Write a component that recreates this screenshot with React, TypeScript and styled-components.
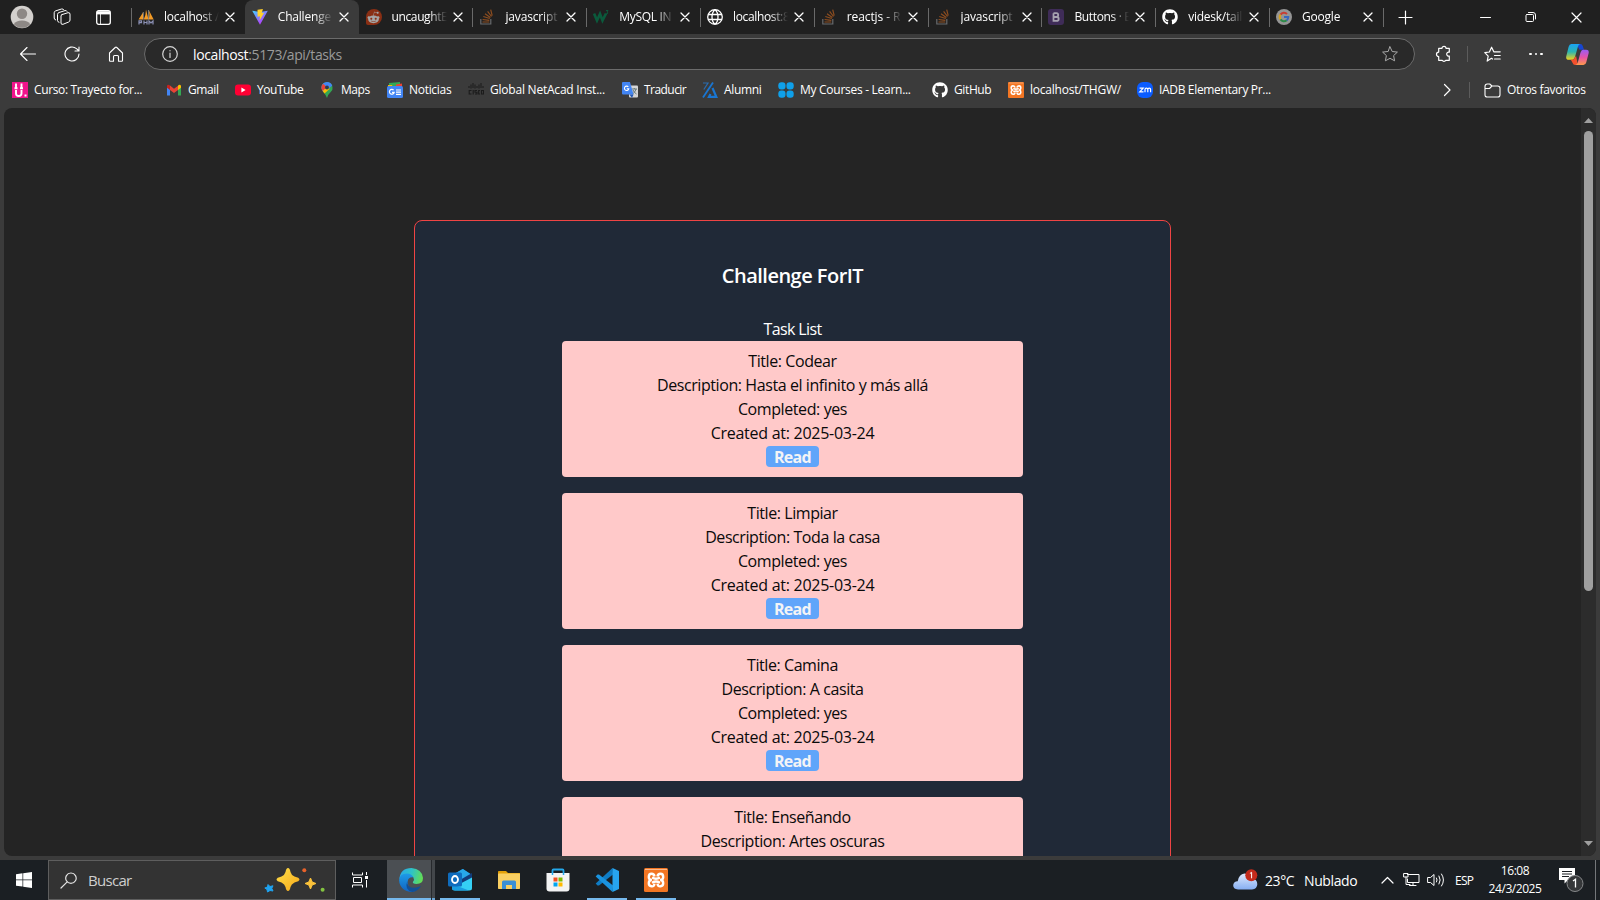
import React from "react";
import styled, { createGlobalStyle, css } from "styled-components";
import { FaGithub, FaRedditAlien } from "react-icons/fa";

const Global = createGlobalStyle`
  * { box-sizing: border-box; }
  body { margin: 0; background: #3b3b3b; overflow: hidden; }
  svg { display: block; flex: none; }
`;

const uiFont = css`
  font-family: "Open Sans", "Noto Sans", sans-serif;
  white-space: nowrap;
`;

const Screen = styled.div`
  ${uiFont}
  width: 1600px;
  height: 900px;
  display: flex;
  flex-direction: column;
  background: #3b3b3b;
  color: #fff;
  font-size: 12px;
  overflow: hidden;
`;

/* ---------- tab strip ---------- */
const TabStrip = styled.div`
  display: flex;
  align-items: stretch;
  height: 34px;
  background: #202020;
`;
const StripTools = styled.div`
  display: flex;
  align-items: center;
  width: 131px;
  padding-left: 10px;
`;
const WorkspacesSlot = styled.span`
  margin: 0 25px 0 19px;
`;
const Tab = styled.div<{ $active?: boolean; $line: boolean }>`
  display: flex;
  align-items: center;
  flex: none;
  width: 113.8px;
  padding-left: 7px;
  position: relative;
  background: ${(p) => (p.$active ? "#3b3b3b" : "transparent")};
  border-radius: 8px 8px 0 0;
  &::before {
    content: "";
    display: ${(p) => (p.$line ? "block" : "none")};
    position: absolute;
    left: 0;
    top: 8px;
    width: 1px;
    height: 19px;
    background: #6a6a6a;
  }
`;
const TabTitle = styled.span<{ $ls: number }>`
  margin-left: 10px;
  width: 59px;
  line-height: 18px;
  letter-spacing: ${(p) => p.$ls}px;
  mask-image: linear-gradient(90deg, #000 37px, transparent 55px);
`;
const TabClose = styled.span`
  display: flex;
  margin-left: 2px;
`;
const StripEnd = styled.div`
  display: flex;
  align-items: center;
  flex: 1;
  padding-left: 15px;
  position: relative;
  &::before {
    content: "";
    position: absolute;
    left: 0;
    top: 8px;
    width: 1px;
    height: 19px;
    background: #6a6a6a;
  }
`;
const WindowButtons = styled.div`
  display: flex;
  align-items: center;
  gap: 34px;
  margin-left: 67px;
`;

/* ---------- address row ---------- */
const Toolbar = styled.div`
  display: flex;
  align-items: center;
  height: 40px;
  padding-left: 20px;
`;
const NavButtons = styled.div`
  display: flex;
  gap: 28px;
  width: 124px;
`;
const AddressBar = styled.div`
  display: flex;
  align-items: center;
  width: 1271px;
  height: 32px;
  padding: 0 16px 0 17px;
  border: 1px solid #6b6b6b;
  border-radius: 16px;
  background: #292929;
`;
const Url = styled.span`
  flex: 1;
  margin-left: 15px;
  padding-top: 1px;
  font-size: 14px;
  line-height: 20px;
  letter-spacing: -0.38px;
  color: #9a9a9a;
  b { font-weight: 400; color: #fff; }
`;
const ToolbarEnd = styled.div`
  display: flex;
  align-items: center;
  margin-left: 20px;
`;
const ToolbarRule = styled.span`
  width: 1px;
  height: 16px;
  margin: 0 16px 0 14px;
  background: #5c5c5c;
`;
const BookmarkRule = styled(ToolbarRule)`
  margin: 0 14px 0 18px;
`;
const DotsBox = styled.span`
  display: flex;
  gap: 3px;
  margin: 0 23px 0 28px;
  i { width: 2.5px; height: 2.5px; border-radius: 50%; background: #fff; }
`;

/* ---------- bookmarks ---------- */
const BookmarkBar = styled.div`
  display: flex;
  align-items: center;
  height: 34px;
  padding: 0 0 2px 12px;
`;
const Bookmark = styled.div<{ $w: number; $ls: number }>`
  display: flex;
  align-items: center;
  gap: 6px;
  flex: none;
  width: ${(p) => p.$w}px;
  letter-spacing: ${(p) => p.$ls}px;
  line-height: 16px;
`;
const BookmarkEnd = styled.div`
  display: flex;
  align-items: center;
  flex: 1;
`;
const FolderName = styled.span`
  margin-left: 6px;
  line-height: 16px;
  letter-spacing: -0.34px;
`;

/* ---------- page ---------- */
const Viewport = styled.div`
  display: flex;
  width: 1592px;
  height: 748px;
  margin: 0 4px 4px;
  border-radius: 8px;
  background: #242424;
  overflow: hidden;
  flex: none;
`;
const Page = styled.main`
  flex: 1;
  height: 748px;
  padding-top: 112px;
  overflow: hidden;
`;
const Panel = styled.section`
  display: flex;
  flex-direction: column;
  align-items: center;
  width: 757px;
  height: 900px;
  margin: 0 auto;
  padding-top: 41px;
  border: 1px solid #ef4444;
  border-radius: 8px;
  background: #202937;
`;
const Heading = styled.h1`
  margin: 0 0 27px;
  font-size: 20px;
  font-weight: 600;
  line-height: 28px;
  letter-spacing: -0.52px;
`;
const ListTitle = styled.h2`
  margin: 0;
  font-size: 16px;
  font-weight: 400;
  line-height: 24px;
  letter-spacing: -0.62px;
`;
const TaskList = styled.div`
  display: flex;
  flex-direction: column;
  gap: 16px;
`;
const TaskCard = styled.article`
  display: flex;
  flex-direction: column;
  align-items: center;
  width: 461px;
  height: 136px;
  padding: 8px;
  border-radius: 4px;
  background: #ffc9c9;
  color: #0a0a0a;
`;
const TaskLine = styled.p<{ $ls: number }>`
  margin: 0;
  font-size: 16px;
  line-height: 24px;
  letter-spacing: ${(p) => p.$ls}px;
`;
const ReadButton = styled.button`
  ${uiFont}
  width: 53px;
  height: 21px;
  margin-top: 1px;
  padding: 0;
  border: 0;
  border-radius: 4px;
  background: #60a5fa;
  color: #f3f4f6;
  font-size: 16px;
  font-weight: 700;
  line-height: 22px;
  letter-spacing: -0.65px;
`;
const ScrollTrack = styled.div`
  display: flex;
  flex-direction: column;
  align-items: center;
  width: 15px;
  padding: 10px 0;
  background: #2c2c2c;
`;
const Thumb = styled.div`
  width: 9px;
  height: 460px;
  margin: 8px 0 auto;
  border-radius: 5px;
  background: #9f9f9f;
`;

/* ---------- taskbar ---------- */
const Taskbar = styled.footer`
  display: flex;
  align-items: center;
  height: 40px;
  flex: none;
  background: #1b1f23;
`;
const StartButton = styled.div`
  display: flex;
  justify-content: center;
  width: 48px;
`;
const SearchBox = styled.div`
  display: flex;
  align-items: center;
  width: 288px;
  height: 40px;
  padding: 0 9px 0 11px;
  border: 1px solid #5e5e5e;
  background: #333;
`;
const SearchText = styled.span`
  flex: 1;
  margin-left: 11px;
  font-size: 15px;
  letter-spacing: -0.7px;
  color: #cfcfcf;
`;
const TaskViewButton = styled.div`
  display: flex;
  justify-content: center;
  width: 51px;
  padding-right: 3px;
`;
const AppButton = styled.div<{ $open?: boolean; $active?: boolean }>`
  display: flex;
  align-items: center;
  justify-content: center;
  width: ${(p) => (p.$active ? 44 : 40)}px;
  height: 40px;
  margin-right: 9px;
  padding-left: ${(p) => (p.$active ? 4 : 0)}px;
  background: ${(p) => (p.$active ? "#4b4f53" : "transparent")};
  box-shadow: ${(p) => (p.$open ? "inset 0 -2px #76b9ed" : "none")};
`;
const StackEdge = styled.div`
  width: 4px;
  height: 40px;
  margin: 0 5px 0 -9px;
  border-left: 1px solid #26292d;
  background: #43474b;
  box-shadow: inset 0 -2px #69a6d6;
`;
const Weather = styled.div`
  display: flex;
  align-items: center;
  margin-left: auto;
  width: 148px;
  font-size: 14px;
  letter-spacing: -0.38px;
`;
const Temp = styled.span`
  width: 39px;
  margin-left: 7px;
`;
const Tray = styled.div`
  display: flex;
  align-items: center;
  gap: 7px;
  width: 74px;
`;
const TrayArrow = styled.span`
  margin-right: 2px;
`;
const Lang = styled.span`
  width: 30px;
  letter-spacing: -0.75px;
`;
const Clock = styled.div`
  width: 60px;
  text-align: center;
  line-height: 18px;
  letter-spacing: -0.45px;
  padding-bottom: 1px;
`;
const Notify = styled.div`
  width: 36px;
  margin-left: 14px;
`;
const DesktopEdge = styled.div`
  width: 5px;
  height: 40px;
  border-left: 1px solid #74777a;
`;

/* ---------- icons ---------- */
type LineProps = { w?: number; h?: number; d: string; sw?: number; color?: string; fill?: string };
const Line = ({ w = 16, h = w, d, sw = 1, color = "#fff", fill = "none" }: LineProps) => (
  <svg width={w} height={h} viewBox={`0 0 ${w} ${h}`} fill={fill} stroke={color} strokeWidth={sw} strokeLinecap="round" strokeLinejoin="round">
    <path d={d} />
  </svg>
);

const Avatar = () => (
  <svg width="24" height="24" viewBox="0 0 24 24">
    <circle cx="12" cy="12" r="11.3" fill="#d3d0cd" />
    <circle cx="12" cy="8.700" r="5.200" fill="#8d8885" />
    <path d="M3.800 19.200Q6 15.600 12 15.600T20.200 19.200A11 11 0 0 1 3.800 19.200Z" fill="#8d8885" />
  </svg>
);
const Workspaces = () => (
  <Line w={18} d="M9 6.600 15 4.700Q17 4.300 17 6.200V12q0 1.500-1.300 2L10 16.300Q8 16.800 8 15V8Q8 7 9 6.600ZM6 14.300Q4.500 14 4.500 12.500V6.500Q4.500 5 6 4.500L12 2.600Q13.500 2.200 14 3.300M2.700 12Q1.200 11.600 1.200 10V4.700Q1.200 3.300 2.600 2.900L8.500 1Q10.200.6 10.700 1.700" />
);
const TabActions = () => (
  <svg width="15" height="15" viewBox="0 0 15 15" fill="none" stroke="#fff">
    <rect x=".7" y=".7" width="13.6" height="13.6" rx="2" strokeWidth="1.300" />
    <path d="M1 2.800h13" strokeWidth="3.200" />
    <path d="M4.500 4v10" strokeWidth=".8" />
  </svg>
);
const PhpMyAdmin = () => (
  <svg width="16" height="16" viewBox="0 0 16 16">
    <path d="M.5 10.500 5 3.500V10.500ZM5.700 10.500Q8 6 8 .5L10.500 10.500ZM10.800 10.500Q12 6 11 1.500L15.700 10.500Z" fill="#f29a26" />
    <path d="M5.300 3v7.500M10.600 1v9.500" stroke="#c8c4be" strokeWidth=".6" />
    <path d="M1 15.500V11.800H3.500V13.700H1M6 15.500v-4M9 15.500v-4M6 13.500h3M11 15.500v-3.500l2 2 2-2v3.500" fill="none" stroke="#8b90b4" strokeWidth="1.200" />
  </svg>
);
const Vite = () => (
  <svg width="16" height="16" viewBox="0 0 16 16">
    <defs>
      <linearGradient id="vite" x1="0" y1="0" x2=".6" y2="1"><stop stopColor="#41d1ff" /><stop offset="1" stopColor="#bd34fe" /></linearGradient>
    </defs>
    <path d="M.2 1.700 8 3 15.800 1.700 8 15.800Z" fill="url(#vite)" />
    <path d="M5.500.8 10.900 0 9.800 4.100l2.300-.4L7.600 11.500 8 7.200 5.600 7.700Z" fill="#ffd02b" />
  </svg>
);
const RoundReddit = styled.span`
  display: flex;
  align-items: center;
  justify-content: center;
  width: 16px;
  height: 16px;
  border-radius: 8px 8px 8px 2px;
  background: #8a2f14;
  color: #a5a5a5;
`;
const Reddit = () => <RoundReddit><FaRedditAlien size={13} /></RoundReddit>;
const Stack = () => (
  <svg width="16" height="16" viewBox="0 0 16 16" fill="none">
    <path d="M1.800 10v5h10v-5" stroke="#686a6d" strokeWidth="1.200" />
    <path d="M3.500 13h6.800M3.600 10.500l6.700.8M4.300 7.500l6.500 2M6 4.700l5.400 3.700M8.600 2.300l3.900 5.200M11.700.6l1.500 6" stroke="#8e4e20" strokeWidth="1.200" />
  </svg>
);
const W3 = () => (
  <svg width="16" height="16" viewBox="0 0 16 16" fill="none" stroke="#0b5a3c">
    <path d="M1 4.500 4 11.500 7 5l2.500 6.500L13 4.500" strokeWidth="2.700" />
    <path d="M13 1.500h2L14 3q1.500.5 0 2h-1" strokeWidth="1" />
  </svg>
);
const Globe = () => <Line w={16} sw={1.300} d="M8 .7a7.300 7.300 0 1 0 0 14.600A7.300 7.300 0 0 0 8 .7ZM8 .7C4 4 4 12 8 15.300M8 .7c4 3.300 4 11.300 0 14.600M1.500 5.500h13M1.500 10.500h13" />;
const Bootstrap = () => (
  <svg width="16" height="16" viewBox="0 0 16 16">
    <rect width="16" height="16" rx="3" fill="#3f2c58" />
    <path d="M5.500 4.200v7.600h3.200q2 0 2-1.900t-2-1.900H5.500M8.500 8q1.700-.1 1.700-1.900t-1.700-1.900h-3" fill="none" stroke="#a7a2b0" strokeWidth="1.800" />
  </svg>
);
const Google = () => (
  <svg width="16" height="16" viewBox="0 0 16 16" fill="none" strokeWidth="2.100">
    <circle cx="8" cy="8" r="8" fill="#959595" />
    <path d="M4.500 5.600A4.300 4.300 0 0 1 11 5" stroke="#c93c32" />
    <path d="M4.500 10.400a4.300 4.300 0 0 1 0-4.800" stroke="#d6a120" />
    <path d="M10.700 11.300a4.300 4.300 0 0 1-6.200-.9" stroke="#2d8a48" />
    <path d="M8 8h4.200q0 2.200-1.500 3.300" stroke="#3867be" />
  </svg>
);
const Close = () => <Line w={10} d="M1 1l8 8M9 1l-8 8" sw={1.300} />;

const CursoIcon = () => (
  <svg width="16" height="16" viewBox="0 0 16 16">
    <rect width="16" height="16" fill="#f0148c" />
    <path d="M4 1.500v4M9.500 1.500v4M2.500 6.200h3M8 6.200h3M4 8v3.500q0 2.500 2.700 2.500t2.800-2.500V8" stroke="#fff" strokeWidth="1.900" fill="none" />
    <rect x="12.500" y="12.500" width="2" height="2" fill="#fff" />
  </svg>
);
const Gmail = () => (
  <svg width="16" height="16" viewBox="0 0 16 16">
    <path d="M1 4v9.500h3V6.500Z" fill="#4285f4" />
    <path d="M15 4v9.500h-3V6.500Z" fill="#34a853" />
    <path d="M12 4v4l3-2.300V4Q14.500 2 12.500 3Z" fill="#fbbc04" />
    <path d="M4 3.500V8L8 11l4-3V3.700L8 6.800Z" fill="#ea4335" />
    <path d="M1 5.700 4 8V3.600Q1.500 1.500 1 4Z" fill="#c5221f" />
  </svg>
);
const YouTube = () => (
  <svg width="16" height="16" viewBox="0 0 16 16">
    <rect y="2.400" width="16" height="11.200" rx="3" fill="#f03" />
    <path d="M6.400 5.600v4.800L10.600 8Z" fill="#fff" />
  </svg>
);
const MapsIcon = () => (
  <svg width="16" height="16" viewBox="0 0 16 16">
    <path d="M8 0a5.500 5.500 0 0 0-5.500 5.500Q2.500 8 4.500 10.200T8 16q.8-3.500 3.500-5.800t2-4.700A5.500 5.500 0 0 0 8 0Z" fill="#34a853" />
    <path d="M8 0a5.500 5.500 0 0 1 5.200 3.700L4.600 10.300Q2.500 8 2.500 5.500A5.500 5.500 0 0 1 8 0Z" fill="#4285f4" />
    <path d="M4 1.700 8 5 3.600 9Q2 7 2.600 4Z" fill="#ea4335" />
    <path d="M3.700 9 9.500 3.700 10.500 7 5.500 11.500Z" fill="#fbbc04" />
    <circle cx="8" cy="5.500" r="2" fill="#2a3b52" />
  </svg>
);
const News = () => (
  <svg width="16" height="16" viewBox="0 0 16 16">
    <path d="M2 1 13 0v5H2Z" fill="#34a853" />
    <path d="M9 2.500l6-1v5H9Z" fill="#ea4335" />
    <path d="M1 3h4L6 6H1Z" fill="#fbbc04" />
    <rect y="4" width="16" height="12" rx="1.500" fill="#4285f4" />
    <path d="M6.600 8.100A2.400 2.400 0 1 0 7.200 10.300H5M9 8h5M9 10.200h5M9 12.400h5" stroke="#fff" strokeWidth="1.200" fill="none" />
  </svg>
);
const Cisco = () => (
  <svg width="16" height="16" viewBox="0 0 16 16" stroke="#1b1b1b" fill="none">
    <path d="M1 4v2M3 2.500v4M5 1V6M7 2.500v4M9 4V6M11 2.500v4M13 1V6M15 4v2" strokeWidth="1" />
    <path d="M3.500 8.500H1.200v3.500h2.300M5.200 8v4.500M9 8.500H7v1.700h2v1.800H7M12 8.500h-1.300v3.500H12M13.500 8.500h2v3.500h-2Z" strokeWidth="1.100" />
  </svg>
);
const Translate = () => (
  <svg width="16" height="16" viewBox="0 0 16 16">
    <rect x="7" y="3.500" width="9" height="12" rx="1" fill="#d5d5d5" />
    <path d="M9.500 7h5.500M12.300 6v1M10.500 12q3-2 3.500-5M11 8q1 2.500 3.500 4" stroke="#677" fill="none" />
    <path d="M1 0h7l3.500 12.500H1Q0 12.500 0 11.500V1Q0 0 1 0Z" fill="#4285f4" />
    <path d="m7.500 12.500 2.500 3.500 1.500-3.500Z" fill="#2459b5" />
    <path d="M6.300 4.900A2.200 2.200 0 1 0 6.800 6.700H4.800" stroke="#fff" fill="none" strokeWidth="1.100" />
  </svg>
);
const Alumni = () => (
  <svg width="16" height="16" viewBox="0 0 16 16" fill="none" stroke="#1976d2">
    <path d="M1 1h5L1.800 7.500" strokeWidth="1.200" stroke="#2a6cb0" />
    <path d="M11 .5 1 15.500" strokeWidth="1.800" />
    <path d="M10.500 6 14.300 14.800H7L8.500 12" strokeWidth="2.200" />
  </svg>
);
const Courses = () => (
  <svg width="16" height="16" viewBox="0 0 16 16" fill="#0fa0ea">
    <rect x=".3" y=".3" width="7.200" height="7.200" rx="3" />
    <rect x="8.500" y=".3" width="7.200" height="7.200" rx="3" />
    <rect x=".3" y="8.500" width="7.200" height="7.200" rx="3" />
    <rect x="8.500" y="8.500" width="7.200" height="7.200" rx="3" />
  </svg>
);
const Xampp = ({ s = 16 }: { s?: number }) => (
  <svg width={s} height={s} viewBox="0 0 24 24">
    <rect width="24" height="24" rx="1.500" fill="#f37623" />
    <path d="M1 1.500h22" stroke="#fbb98b" strokeWidth="1" />
    <g fill="none" stroke="#fff" strokeWidth="2.400" strokeLinejoin="round">
      <path d="M10.500 8.500Q10.200 5.800 7.500 5.800T4.800 9Q4.800 11.500 7 12 4.800 12.500 4.800 15.200T7.500 18.300 10.500 15.700M13.500 8.500Q13.800 5.800 16.500 5.800T19.200 9Q19.200 11.500 17 12 19.200 12.500 19.200 15.200T16.500 18.300 13.500 15.700" />
      <path d="M8 9.500q4 2.400 8 0M8 14.700q4-2.400 8 0" />
    </g>
  </svg>
);
const Zoom = () => (
  <svg width="16" height="16" viewBox="0 0 16 16">
    <rect width="16" height="16" rx="6" fill="#0b5cff" />
    <path d="M2.600 6.200h3.600L2.800 9.900h3.700M8 10.300V7.500q0-1.300 1.400-1.300t1.400 1.300v2.800M10.800 7.500q0-1.300 1.400-1.300t1.400 1.300v2.800" fill="none" stroke="#fff" strokeWidth="1.200" />
  </svg>
);
const Copilot = () => (
  <svg width="23" height="21" viewBox="0 0 24 22">
    <defs>
      <linearGradient id="cpA" x1="0" y1="0" x2="0" y2="1"><stop stopColor="#1aa3f5" /><stop offset=".5" stopColor="#2cb5b0" /><stop offset="1" stopColor="#f2d21c" /></linearGradient>
      <linearGradient id="cpB" x1="0" y1="0" x2="0" y2="1"><stop stopColor="#9a5cf5" /><stop offset=".5" stopColor="#e653a8" /><stop offset="1" stopColor="#ff9a4a" /></linearGradient>
    </defs>
    <path d="M11 0h4q2 0 2.500 2l1.300 4H14Z" fill="#1746d1" />
    <path d="M5.500 0H15q-2 .5-2.500 2.500L9.500 13q-1 3.500-4 3.500H3Q-.7 16.500.3 12.500L2.700 3Q3.500 0 5.500 0Z" fill="url(#cpA)" />
    <path d="M5 16.500q3.500 0 4.500-3l1-1 2 9.500H9.500q-2 0-2.600-2.200Z" fill="#f2502d" />
    <path d="M18 6h3q3.500 0 2.600 4l-2.400 9q-.7 3-3 3H10q1.700-.5 2.300-2.500L15 9.500Q16 6 18 6Z" fill="url(#cpB)" />
  </svg>
);
const Edge = () => (
  <svg width="24" height="24" viewBox="0 0 24 24">
    <defs>
      <linearGradient id="edA" x1="0" y1=".3" x2="1" y2=".5"><stop stopColor="#29a9ea" /><stop offset=".5" stopColor="#2fc3c6" /><stop offset="1" stopColor="#63de53" /></linearGradient>
      <linearGradient id="edB" x1="0" y1="0" x2="0" y2="1"><stop stopColor="#1d9be8" /><stop offset="1" stopColor="#1263c0" /></linearGradient>
    </defs>
    <path d="M.3 11Q1.500 0 12.500 0 23 .8 24 10q0 5.800-6.500 6-4.500-.2-3.500-2.300 1.800-2 .3-4.500Q8 4 .3 11Z" fill="url(#edA)" />
    <path d="M.1 12Q1 5.500 8 5.600q4.500.2 6.500 3.800-5.700-.6-5.800 4.600Q9 22 16 23.300A12 12 0 0 1 .1 12Z" fill="url(#edB)" />
    <path d="M8.300 13Q7.500 20 16 19.800q3.500-.3 6-2Q19.300 23 13.500 24 5 22 8.300 13Z" fill="#124f96" />
  </svg>
);
const Outlook = () => (
  <svg width="24" height="24" viewBox="0 0 24 24">
    <path d="M5 7 14.500 1 24 7v6H5Z" fill="#1490df" />
    <path d="M6 6 15 1l9 6-9 6Z" fill="#28a8ea" />
    <path d="M12 12 24 5v7L9 21Z" fill="#123b7a" />
    <path d="M4 20 24 9.500V20q0 2.500-2.500 2.500H7Q4 22.500 4 20Z" fill="#35d0f5" />
    <path d="M4 16 21 22.500H7Q4 22.500 4 20Z" fill="#1a9de0" />
    <rect y="4.500" width="14" height="14" rx="1.500" fill="#0f6cbd" />
    <ellipse cx="7" cy="11.500" rx="3" ry="3.500" fill="none" stroke="#fff" strokeWidth="1.800" />
  </svg>
);
const Explorer = () => (
  <svg width="22" height="20" viewBox="0 0 22 20">
    <path d="M0 1.500Q0 1 1 1h7l2 2h12v4H0Z" fill="#e3a008" />
    <rect y="3.500" width="22" height="15.500" rx=".7" fill="#f9cf62" />
    <path d="M4 19v-7q0-1.500 1.500-1.500h11q1.500 0 1.500 1.500v7h-4v-4H8v4Z" fill="#3a8fd6" />
  </svg>
);
const Store = () => (
  <svg width="24" height="24" viewBox="0 0 24 24">
    <path d="M6.500 6V2.500Q6.500 1.500 7.500 1.500h9q1 0 1 1V6" fill="none" stroke="#24a8ea" strokeWidth="1.800" />
    <path d="M.5 5h23v15.500q0 3-3 3h-17q-3 0-3-3Z" fill="#f3f3f3" />
    <path d="M7.500 9.500h4v4h-4Z" fill="#f25022" /><path d="M12.500 9.500h4v4h-4Z" fill="#7fba00" />
    <path d="M7.500 14.500h4v4h-4Z" fill="#00a4ef" /><path d="M12.500 14.500h4v4h-4Z" fill="#ffb900" />
    <path d="M6.500 5v2M17.500 5v2" stroke="#24a8ea" strokeWidth="1.500" />
  </svg>
);
const VSCode = () => (
  <svg width="24" height="24" viewBox="0 0 24 24">
    <path d="M17.500 0 .7 15.500 2.500 17.500 4 17.500 18 6.500Z" fill="#0f7cc4" />
    <path d="M17.500 24 .7 8.500 2.500 6.500H4L18 17.500Z" fill="#1a93df" />
    <path d="M17.500 0 24 3v18l-6.500 3Z" fill="#27a5ef" />
  </svg>
);
const Sparkles = () => (
  <svg width="62" height="28" viewBox="0 0 62 28">
    <defs><linearGradient id="spark" x1="0" y1="0" x2="1" y2="1"><stop stopColor="#ffe04a" /><stop offset="1" stopColor="#f6a81a" /></linearGradient></defs>
    <path d="M24 2q1.800 0 2.500 4 .7 3 4 4.500 5 1.200 5 3t-5 3Q27.200 18 26.500 21 25.800 25 24 25t-2.500-4q-.7-3-4-4.500-5-1.200-5-3t5-3Q20.800 9 21.500 6 22.200 2 24 2Z" fill="url(#spark)" />
    <path d="m46.500 12 1.700 4 3.800 1.500-3.800 1.500-1.700 4-1.700-4L41 17.500l3.800-1.500Z" fill="#fbc23a" stroke="#fbc23a" />
    <path d="m4 18.500 2 2 3-.7-1.200 2.500L9 25l-3-.5L3.500 26l-.5-2.500L.8 22 3.500 21Z" fill="#1fa3f0" stroke="#1fa3f0" />
    <circle cx="40.300" cy="4.200" r="2" fill="#e8622a" />
    <circle cx="58.600" cy="23.700" r="2" fill="#83c341" />
  </svg>
);
const WinLogo = () => (
  <svg width="16" height="16" viewBox="0 0 16 16" fill="#fff">
    <path d="M0 2.300 6.500 1.300v6.200H0ZM7.200 1.200 16 0v7.500H7.200ZM0 8.300h6.500v6.300L0 13.700ZM7.200 8.300H16V16l-8.800-1.300Z" />
  </svg>
);
const TaskView = () => (
  <svg width="16" height="16" viewBox="0 0 16 16" fill="none" stroke="#fff">
    <path d="M.5.500V3h10V.5M.5 15.500V13h10v2.500M1.500 5.500h8v5h-8ZM14.500 0v3M14.500 8v7.500" />
    <rect x="13.500" y="4.500" width="2" height="2" fill="#fff" />
  </svg>
);
const CloudIcon = () => (
  <svg width="25" height="24" viewBox="0 0 25 24">
    <defs><linearGradient id="cloud" x1="0" y1="0" x2="0" y2="1"><stop stopColor="#dfeafd" /><stop offset="1" stopColor="#86aef2" /></linearGradient></defs>
    <path d="M5 21.500q-5-.5-4.800-4.500.5-3.700 4.500-3.800Q6 6 11.500 5.500q5.500.3 6.500 5.500 6.300-.5 6.300 5.300-.2 5-5.300 5.200Z" fill="url(#cloud)" />
    <circle cx="18.300" cy="7.300" r="6" fill="#c42b1c" />
    <path d="m16.900 5.500 1.700-1.200v6" stroke="#fff" fill="none" />
  </svg>
);
const NotifyIcon = () => (
  <svg width="26" height="26" viewBox="0 0 26 26">
    <path d="M0 1h16v12H9l-3.500 3.500V13H0Z" fill="#fff" />
    <path d="M3 4.500h10M3 7h10M3 9.500h7" stroke="#1b1f23" />
    <circle cx="16" cy="16.500" r="8" fill="#353739" stroke="#86888a" />
    <path d="m14 14 2.500-1.700V20.500" stroke="#fff" strokeWidth="1.300" fill="none" />
  </svg>
);
const Dots = () => <DotsBox><i /><i /><i /></DotsBox>;

const tabs: { icon: React.ReactNode; title: string; ls: number; active?: boolean }[] = [
  { icon: <PhpMyAdmin />, title: "localhost /", ls: -0.25 },
  { icon: <Vite />, title: "Challenge", ls: -0.2, active: true },
  { icon: <Reddit />, title: "uncaughtE", ls: -0.4 },
  { icon: <Stack />, title: "javascript -", ls: -0.15 },
  { icon: <W3 />, title: "MySQL IN", ls: -0.3 },
  { icon: <Globe />, title: "localhost:8", ls: -0.35 },
  { icon: <Stack />, title: "reactjs - R", ls: -0.1 },
  { icon: <Stack />, title: "javascript -", ls: -0.15 },
  { icon: <Bootstrap />, title: "Buttons · E", ls: -0.35 },
  { icon: <FaGithub size={16} />, title: "videsk/tail", ls: -0.25 },
  { icon: <Google />, title: "Google", ls: -0.2 },
];

const bookmarks: { icon: React.ReactNode; name: string; w: number; ls: number }[] = [
  { icon: <CursoIcon />, name: "Curso: Trayecto for...", w: 154, ls: -0.36 },
  { icon: <Gmail />, name: "Gmail", w: 69, ls: -0.4 },
  { icon: <YouTube />, name: "YouTube", w: 84, ls: -0.45 },
  { icon: <MapsIcon />, name: "Maps", w: 68, ls: -0.45 },
  { icon: <News />, name: "Noticias", w: 81, ls: -0.3 },
  { icon: <Cisco />, name: "Global NetAcad Inst...", w: 154, ls: -0.22 },
  { icon: <Translate />, name: "Traducir", w: 80, ls: -0.55 },
  { icon: <Alumni />, name: "Alumni", w: 76, ls: -0.35 },
  { icon: <Courses />, name: "My Courses - Learn...", w: 154, ls: -0.28 },
  { icon: <FaGithub size={16} />, name: "GitHub", w: 76, ls: -0.38 },
  { icon: <Xampp />, name: "localhost/THGW/", w: 129, ls: -0.22 },
  { icon: <Zoom />, name: "IADB Elementary Pr...", w: 306, ls: -0.33 },
];

const tasks = [
  { title: "Codear", description: "Hasta el infinito y más allá" },
  { title: "Limpiar", description: "Toda la casa" },
  { title: "Camina", description: "A casita" },
  { title: "Enseñando", description: "Artes oscuras" },
];

export default function App() {
  return (
    <Screen>
      <Global />
      <TabStrip>
        <StripTools>
          <Avatar />
          <WorkspacesSlot><Workspaces /></WorkspacesSlot>
          <TabActions />
        </StripTools>
        {tabs.map((t, i) => (
          <Tab key={i} $active={t.active} $line={i !== 1 && i !== 2}>
            {t.icon}
            <TabTitle $ls={t.ls}>{t.title}</TabTitle>
            <TabClose><Close /></TabClose>
          </Tab>
        ))}
        <StripEnd>
          <Line w={15} d="M7.500 1v13M1 7.500h13" sw={1.200} />
          <WindowButtons>
            <Line w={11} d="M.5 5.500h10" />
            <Line w={12} d="M2 3.500h5.500q1 0 1 1v5q0 1-1 1H2q-1 0-1-1v-5q0-1 1-1ZM3.500 1.500H8q2.500 0 2.500 2.500v4" />
            <Line w={11} d="M1 1l9 9M10 1l-9 9" sw={1.200} />
          </WindowButtons>
        </StripEnd>
      </TabStrip>

      <Toolbar>
        <NavButtons>
          <Line w={16} d="M.5 8h15M7 1.500.5 8 7 14.500" sw={1.100} />
          <Line w={16} d="M15 8A7 7 0 1 1 12.500 2.600L15 5M15 1v4h-4" sw={1.100} />
          <Line w={16} d="M1.500 7 7.200 1.500q.8-.7 1.600 0L14.500 7v7.500q0 .7-.7.7h-3.300V10.500q0-1-1-1h-3q-1 0-1 1v4.700H2.200q-.7 0-.7-.7Z" sw={1.100} />
        </NavButtons>
        <AddressBar>
          <Line w={16} color="#d5d5d5" sw={1.200} d="M8 .7a7.300 7.300 0 1 0 0 14.600A7.300 7.300 0 0 0 8 .7ZM8 7v4.500M8 4.500v.3" />
          <Url><b>localhost</b>:5173/api/tasks</Url>
          <Line w={16} color="#a9a9a9" d="M8 .8l2.200 4.700 5.200.6-3.800 3.500 1 5.200L8 12.300 3.400 14.800l1-5.200L.6 6.100l5.200-.6Z" />
        </AddressBar>
        <ToolbarEnd>
          <Line w={18} sw={1.200} d="M7 3.300a2 2 0 0 1 4 0h3.300v3.900a2 2 0 1 0 0 3.800v4.300h-3.500a2 2 0 0 1-3.600 0H3.700v-3.800a2.200 2.200 0 0 1 0-4.400V3.300Z" />
          <ToolbarRule />
          <Line w={17} sw={1.200} d="M8.500 13 7.500 12.300 3.200 15.100 4.200 10.200.8 6.700l4.600-.7 2.200-4.800 2.200 4.600h6.400M10.500 9.500h5.700M10.500 13h5.700" />
          <Dots />
          <Copilot />
        </ToolbarEnd>
      </Toolbar>

      <BookmarkBar>
        {bookmarks.map((b) => (
          <Bookmark key={b.name} $w={b.w} $ls={b.ls}>{b.icon}<span>{b.name}</span></Bookmark>
        ))}
        <BookmarkEnd>
          <Line w={8} h={14} d="M1.500 1.500 7 7l-5.500 5.500" sw={1.200} />
          <BookmarkRule />
          <Line w={17} h={15} sw={1.100} d="M1 3.500Q1 1 3.300 1h2.400L8 3h5.700Q16 3 16 5.300v6.400Q16 14 13.700 14H3.300Q1 14 1 11.700ZM1 5.500h4.500L8 3" />
          <FolderName>Otros favoritos</FolderName>
        </BookmarkEnd>
      </BookmarkBar>

      <Viewport>
        <Page>
          <Panel>
            <Heading>Challenge ForIT</Heading>
            <ListTitle>Task List</ListTitle>
            <TaskList>
              {tasks.map((t) => (
                <TaskCard key={t.title}>
                  <TaskLine $ls={-0.43}>Title: {t.title}</TaskLine>
                  <TaskLine $ls={-0.42}>Description: {t.description}</TaskLine>
                  <TaskLine $ls={-0.4}>Completed: yes</TaskLine>
                  <TaskLine $ls={-0.27}>Created at: 2025-03-24</TaskLine>
                  <ReadButton>Read</ReadButton>
                </TaskCard>
              ))}
            </TaskList>
          </Panel>
        </Page>
        <ScrollTrack>
          <Line w={9} h={5} d="M0 5 4.500 0 9 5Z" fill="#9f9f9f" color="none" />
          <Thumb />
          <Line w={9} h={5} d="M0 0 4.500 5 9 0Z" fill="#9f9f9f" color="none" />
        </ScrollTrack>
      </Viewport>

      <Taskbar>
        <StartButton><WinLogo /></StartButton>
        <SearchBox>
          <Line w={17} d="M11 1a5.200 5.200 0 1 1-.1 0ZM7.200 9.900 1 16" sw={1.200} color="#e2e2e2" />
          <SearchText>Buscar</SearchText>
          <Sparkles />
        </SearchBox>
        <TaskViewButton><TaskView /></TaskViewButton>
        <AppButton $active $open><Edge /></AppButton>
        <StackEdge />
        <AppButton $open><Outlook /></AppButton>
        <AppButton><Explorer /></AppButton>
        <AppButton><Store /></AppButton>
        <AppButton $open><VSCode /></AppButton>
        <AppButton $open><Xampp s={24} /></AppButton>
        <Weather><CloudIcon /><Temp>23°C</Temp><span>Nublado</span></Weather>
        <Tray>
          <TrayArrow><Line w={13} h={8} d="M1 7 6.500 1.500 12 7" sw={1.200} /></TrayArrow>
          <Line w={17} h={16} d="M4.500 2.500h11.500v8H4.500V7M1 1.500h4v3.500H1ZM3 5v7.500H7M10 10.500v3M6.500 13.500H13" />
          <Line w={18} h={16} d="M1 5.500h2.500L7 2.500v11l-3.500-3H1ZM9.500 6q1.300 2 0 4M12 4q2.500 4 0 8M14.500 2q4 6 0 12" />
        </Tray>
        <Lang>ESP</Lang>
        <Clock>16:08<br />24/3/2025</Clock>
        <Notify><NotifyIcon /></Notify>
        <DesktopEdge />
      </Taskbar>
    </Screen>
  );
}
